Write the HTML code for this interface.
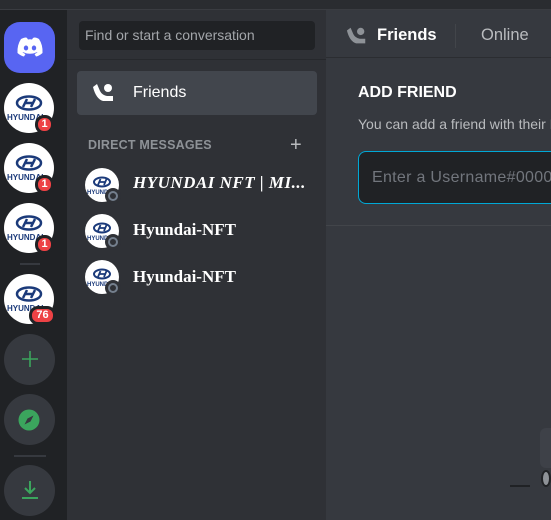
<!DOCTYPE html>
<html><head><meta charset="utf-8"><style>
*{margin:0;padding:0;box-sizing:border-box}
body{width:551px;height:520px;overflow:hidden;background:#202225;font-family:"Liberation Sans",sans-serif;position:relative}
.top{position:absolute;left:0;top:0;width:551px;height:10px;background:#2a2c30;border-bottom:1px solid #3a3c41}
.rail{position:absolute;left:0;top:10px;width:67px;height:510px;background:#202225}
.chan{position:absolute;left:67px;top:10px;width:259px;height:510px;background:#2f3136}
.main{position:absolute;left:326px;top:10px;width:225px;height:510px;background:#36393f}
.a{position:absolute}
.circ{position:absolute;width:50px;height:50px;border-radius:50%;background:#fff;overflow:hidden}
.badge{position:absolute;background:#ed4245;color:#fff;font-weight:bold;font-size:11px;border-radius:9px;border:3px solid #202225;text-align:center;line-height:13px;height:19px}
.btn{position:absolute;left:4px;width:51px;height:51px;border-radius:50%;background:#36393f}
.sep{position:absolute;left:20px;width:20px;height:2px;background:#36393f}
.dm{position:absolute;left:85px;width:34px;height:34px}
.dmname{position:absolute;left:133px;color:#fff;font-family:"Liberation Serif",serif;font-weight:bold;font-size:17px}
</style></head><body>
<div class="top"></div>
<div class="rail"></div>
<div class="chan"></div>
<div class="main"></div>

<div class="a" style="left:4px;top:22px;width:51px;height:51px;border-radius:16px;background:#5865f2"></div>
<svg class="a" style="left:16px;top:36px" width="28" height="22" viewBox="0 0 28 22"><path d="M5 3 Q10 0.5 11 2 L12 3.5 Q14 3 16 3.5 L17 2 Q19 0.5 23 3 Q27 9 26.5 17 Q23 20 20 20.5 L18.5 18 Q21 17 21.5 16 Q14 19.5 6.5 16 Q7 17 9.5 18 L8 20.5 Q5 20 1.5 17 Q1 9 5 3Z" fill="#fff"/><ellipse cx="10" cy="12" rx="2.2" ry="2.5" fill="#5865f2"/><ellipse cx="18" cy="12" rx="2.2" ry="2.5" fill="#5865f2"/></svg>

<div class="circ" style="left:4px;top:83px"><svg width="50" height="50"><ellipse cx="25" cy="20" rx="12" ry="6.5" fill="none" stroke="#1b3a7a" stroke-width="2.5"/><path d="M19 24 L23 16 M27 24 L31 16 M21 20 H29" stroke="#1b3a7a" stroke-width="2.5"/><text x="3" y="37" font-size="8" font-weight="bold" fill="#1b3a7a" font-family="Liberation Sans">HYUNDAI</text></svg></div>
<div class="badge" style="left:35px;top:115px;width:19px">1</div>
<div class="circ" style="left:4px;top:143px"><svg width="50" height="50"><ellipse cx="25" cy="20" rx="12" ry="6.5" fill="none" stroke="#1b3a7a" stroke-width="2.5"/><path d="M19 24 L23 16 M27 24 L31 16 M21 20 H29" stroke="#1b3a7a" stroke-width="2.5"/><text x="3" y="37" font-size="8" font-weight="bold" fill="#1b3a7a" font-family="Liberation Sans">HYUNDAI</text></svg></div>
<div class="badge" style="left:35px;top:175px;width:19px">1</div>
<div class="circ" style="left:4px;top:203px"><svg width="50" height="50"><ellipse cx="25" cy="20" rx="12" ry="6.5" fill="none" stroke="#1b3a7a" stroke-width="2.5"/><path d="M19 24 L23 16 M27 24 L31 16 M21 20 H29" stroke="#1b3a7a" stroke-width="2.5"/><text x="3" y="37" font-size="8" font-weight="bold" fill="#1b3a7a" font-family="Liberation Sans">HYUNDAI</text></svg></div>
<div class="badge" style="left:35px;top:235px;width:19px">1</div>
<div class="sep" style="top:263px"></div>
<div class="circ" style="left:4px;top:274px"><svg width="50" height="50"><ellipse cx="25" cy="20" rx="12" ry="6.5" fill="none" stroke="#1b3a7a" stroke-width="2.5"/><path d="M19 24 L23 16 M27 24 L31 16 M21 20 H29" stroke="#1b3a7a" stroke-width="2.5"/><text x="3" y="37" font-size="8" font-weight="bold" fill="#1b3a7a" font-family="Liberation Sans">HYUNDAI</text></svg></div>
<div class="badge" style="left:29px;top:306px;width:27px">76</div>

<div class="btn" style="top:334px"></div>
<svg class="a" style="left:19px;top:348px" width="22" height="22"><path d="M11 3V19M3 11H19" stroke="#3ba55d" stroke-width="1.6"/></svg>
<div class="btn" style="top:394px"></div>
<svg class="a" style="left:17px;top:408px" width="24" height="24"><circle cx="12" cy="12" r="10.5" fill="#3ba55d"/><path d="M16.5 7.5 L13.5 13.5 L7.5 16.5 L10.5 10.5Z" fill="#36393f"/></svg>
<div class="sep" style="top:455px;left:14px;width:32px"></div>
<div class="btn" style="top:465px"></div>
<svg class="a" style="left:18px;top:478px" width="24" height="24"><path d="M12 3V15M7 10L12 15L17 10M4 20H20" stroke="#3ba55d" stroke-width="2" fill="none"/></svg>

<div class="a" style="left:67px;top:10px;width:259px;height:50px;border-bottom:1px solid #26282c"></div>
<div class="a" style="left:79px;top:21px;width:236px;height:29px;background:#202225;border-radius:4px;color:#a3a6aa;font-size:14px;line-height:29px;padding-left:6px">Find or start a conversation</div>
<div class="a" style="left:77px;top:71px;width:240px;height:44px;background:#42464d;border-radius:4px"></div>
<svg class="a" style="left:91px;top:81px" width="26" height="24" viewBox="0 0 26 24"><path d="M2 6 L6 3 L9 10 Q11 14 16 15 L22 15 L22 20 L12 20 Q5 18 2 6Z" fill="#fff"/><circle cx="17" cy="7" r="4" fill="#fff"/></svg>
<div class="a" style="left:133px;top:84px;color:#fff;font-size:16px">Friends</div>
<div class="a" style="left:88px;top:138px;color:#8e9297;font-size:12.5px;font-weight:bold;letter-spacing:0.2px">DIRECT MESSAGES</div>
<div class="a" style="left:290px;top:134px;color:#b9bbbe;font-size:20px">+</div>

<div class="dm" style="top:168px"><div class="circ" style="width:34px;height:34px;left:0;top:0"><svg width="34" height="34"><ellipse cx="17" cy="14" rx="8" ry="4.5" fill="none" stroke="#1b3a7a" stroke-width="2"/><path d="M13 17L15.5 11M19 17L21.5 11M14 14H21" stroke="#1b3a7a" stroke-width="1.8"/><text x="2" y="26" font-size="6" fill="#1b3a7a" font-weight="bold">HYUNDAI</text></svg></div><div class="a" style="left:20px;top:20px;width:16px;height:16px;border-radius:50%;background:#2f3136"></div><div class="a" style="left:23px;top:23px;width:10px;height:10px;border-radius:50%;border:2.5px solid #747f8d"></div></div>
<div class="dmname" style="top:173px;font-style:italic;letter-spacing:0.5px;width:180px;overflow:hidden;white-space:nowrap">HYUNDAI NFT | MI...</div>
<div class="dm" style="top:214px"><div class="circ" style="width:34px;height:34px;left:0;top:0"><svg width="34" height="34"><ellipse cx="17" cy="14" rx="8" ry="4.5" fill="none" stroke="#1b3a7a" stroke-width="2"/><path d="M13 17L15.5 11M19 17L21.5 11M14 14H21" stroke="#1b3a7a" stroke-width="1.8"/><text x="2" y="26" font-size="6" fill="#1b3a7a" font-weight="bold">HYUNDAI</text></svg></div><div class="a" style="left:20px;top:20px;width:16px;height:16px;border-radius:50%;background:#2f3136"></div><div class="a" style="left:23px;top:23px;width:10px;height:10px;border-radius:50%;border:2.5px solid #747f8d"></div></div>
<div class="dmname" style="top:220px">Hyundai-NFT</div>
<div class="dm" style="top:260px"><div class="circ" style="width:34px;height:34px;left:0;top:0"><svg width="34" height="34"><ellipse cx="17" cy="14" rx="8" ry="4.5" fill="none" stroke="#1b3a7a" stroke-width="2"/><path d="M13 17L15.5 11M19 17L21.5 11M14 14H21" stroke="#1b3a7a" stroke-width="1.8"/><text x="2" y="26" font-size="6" fill="#1b3a7a" font-weight="bold">HYUNDAI</text></svg></div><div class="a" style="left:20px;top:20px;width:16px;height:16px;border-radius:50%;background:#2f3136"></div><div class="a" style="left:23px;top:23px;width:10px;height:10px;border-radius:50%;border:2.5px solid #747f8d"></div></div>
<div class="dmname" style="top:267px">Hyundai-NFT</div>

<div class="a" style="left:326px;top:57px;width:225px;height:1px;background:#2b2d31"></div>
<svg class="a" style="left:345px;top:25px" width="24" height="22" viewBox="0 0 26 24"><path d="M2 6 L6 3 L9 10 Q11 14 16 15 L22 15 L22 20 L12 20 Q5 18 2 6Z" fill="#8e9297"/><circle cx="17" cy="7" r="4" fill="#8e9297"/></svg>
<div class="a" style="left:377px;top:26px;color:#fff;font-size:16.5px;font-weight:bold">Friends</div>
<div class="a" style="left:455px;top:24px;width:1px;height:24px;background:#42454a"></div>
<div class="a" style="left:481px;top:26px;color:#b9bbbe;font-size:16.5px">Online</div>
<div class="a" style="left:358px;top:84px;color:#fff;font-size:16px;font-weight:bold">ADD FRIEND</div>
<div class="a" style="left:358px;top:116px;width:193px;overflow:hidden;color:#b9bbbe;font-size:14px;white-space:nowrap">You can add a friend with their Discord Tag.</div>
<div class="a" style="left:358px;top:151px;width:193px;height:53px;background:#202225;border:1px solid #00a8d6;border-right:none;border-radius:8px 0 0 8px;color:#72767d;font-size:16px;line-height:51px;padding-left:13px;letter-spacing:0.3px;white-space:nowrap;overflow:hidden">Enter a Username#0000</div>
<div class="a" style="left:326px;top:225px;width:225px;height:1px;background:#42454a"></div>
<div class="a" style="left:540px;top:428px;width:11px;height:40px;border-radius:6px 0 0 6px;background:#3e4148"></div>
<div class="a" style="left:510px;top:485px;width:20px;height:2px;background:#202225"></div>
<div class="a" style="left:541px;top:470px;width:10px;height:17px;border-radius:50%;border:2px solid #202225;background:#8e9297"></div>
</body></html>
